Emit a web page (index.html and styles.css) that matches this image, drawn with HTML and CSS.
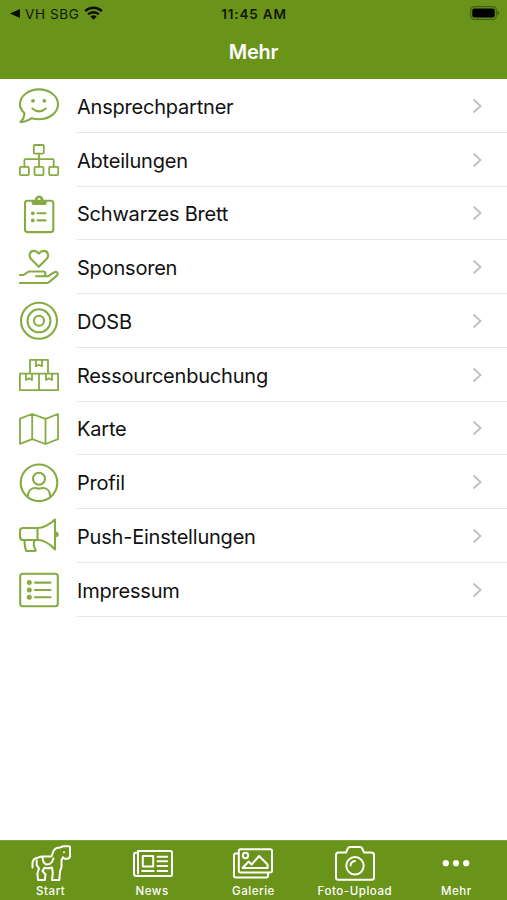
FILE: index.html
```html
<!DOCTYPE html>
<html lang="de">
<head>
<meta charset="utf-8">
<title>Mehr</title>
<link rel="stylesheet" href="styles.css">
</head>
<body>
<div class="app">
  <header class="header">
    <div class="status">
      <div class="back">
        <svg class="back-arrow" viewBox="0 0 10 9"><path d="M10 0v9L0 4.5z"/></svg>
        <span>VH SBG</span>
        <svg class="wifi" viewBox="0 0 19 14"><path d="M1.2 5.1a12 12 0 0 1 16.6 0M4.1 8.3a7.8 7.8 0 0 1 10.8 0"/><path class="wifi-dot" d="M6.4 10.6a4.5 4.5 0 0 1 6.2 0L9.5 13.8z"/></svg>
      </div>
      <span class="time">11:45 AM</span>
      <svg class="battery" viewBox="0 0 30 14"><rect class="shell" x=".7" y=".7" width="25.6" height="12.6" rx="3.6"/><rect x="2.3" y="2.4" width="22.4" height="9.2" rx="2"/><path class="cap" d="M27.4 4.8q2 .7 2 2.2t-2 2.2z"/></svg>
    </div>
    <h1 class="title">Mehr</h1>
  </header>

  <main class="list">
    <a class="row">
      <svg class="icon" viewBox="0 0 40 40"><path d="M5.3 27C2.400 24.400 1 21.600 1 18.300 1 10 9.500 3.400 20 3.400S39 10 39 18.300 30.500 33.300 20 33.300c-2.600 0-5-.3-7.200-1.100C10 34 5.500 36.200 1.500 36c2.500-2.500 4-5.500 3.800-9z"/><path d="M13.300 22.500q6.800 5.800 13.500 0"/><g class="solid"><circle cx="14" cy="14.800" r="1.900"/><circle cx="25.300" cy="14.800" r="1.900"/></g></svg>
      <span class="label">Ansprechpartner</span><svg class="chevron" viewBox="0 0 10 16"><path d="M1.500 1.500L8.500 8l-7 6.500"/></svg>
    </a>
    <a class="row">
      <svg class="icon" viewBox="0 0 40 40"><g class="thin"><rect x="14.800" y="5" width="10" height="8.600" rx="1"/><rect x=".9" y="26.800" width="9" height="8.300" rx="1"/><rect x="15.500" y="26.800" width="9" height="8.300" rx="1"/><rect x="30.200" y="26.800" width="9" height="8.300" rx="1"/><path d="M20 13.600v13.200M5.400 26.800v-6.600q0-1 1-1h27.300q1 0 1 1v6.600"/></g></svg>
      <span class="label">Abteilungen</span><svg class="chevron" viewBox="0 0 10 16"><path d="M1.500 1.500L8.500 8l-7 6.500"/></svg>
    </a>
    <a class="row">
      <svg class="icon" viewBox="0 0 40 40"><rect x="6" y="6.800" width="28.300" height="31.300" rx="2.500"/><path class="solid" fill-rule="evenodd" d="M12.700 6.500h3.100a4.400 4.400 0 1 1 8.700 0h3.100v3q0 1.400-1.500 1.400H14.200q-1.500 0-1.500-1.400zM20.100 4a1.600 1.600 0 1 0 0 3.200 1.600 1.600 0 0 0 0-3.200z"/><path d="M18.500 19.300h8M18.500 26.400h8"/><g class="solid"><circle cx="13.800" cy="19.300" r="1.900"/><circle cx="13.800" cy="26.400" r="1.900"/></g></svg>
      <span class="label">Schwarzes Brett</span><svg class="chevron" viewBox="0 0 10 16"><path d="M1.500 1.500L8.500 8l-7 6.500"/></svg>
    </a>
    <a class="row">
      <svg class="icon" viewBox="0 0 40 40"><path d="M19.800 18.800l-7.700-7.700C9.200 8.200 10.500 3.200 14.600 2.900c2.300-.1 4 1.100 5.200 2.700 1.200-1.600 3-2.800 5.200-2.700 4.200.3 5.400 5.300 2.500 8.200zM1 27h3.600l3.700-2.600Q9.500 23.500 11 23.500h13c3.300 0 3.300 4.700 0 4.700h-7M24.800 28.200h4.500l5.800-3.800c2.700-1.500 4.800 1 2.700 3.200l-7.500 6.400q-1.200 1-3 1H1"/></svg>
      <span class="label">Sponsoren</span><svg class="chevron" viewBox="0 0 10 16"><path d="M1.500 1.500L8.500 8l-7 6.500"/></svg>
    </a>
    <a class="row">
      <svg class="icon" viewBox="0 0 40 40"><circle cx="20" cy="19.800" r="18"/><circle cx="20" cy="19.800" r="11.500"/><circle cx="20" cy="19.800" r="5"/></svg>
      <span class="label">DOSB</span><svg class="chevron" viewBox="0 0 10 16"><path d="M1.500 1.500L8.500 8l-7 6.500"/></svg>
    </a>
    <a class="row">
      <svg class="icon" viewBox="0 0 40 40"><g class="thin"><path d="M11 18.600V4.900h18v13.700M.9 18.600h38.200v16.500H.9zM20 18.600v16.500M17 5v6.300l3-1.500 3 1.500V5M7 18.600V25l3-1.600 3 1.600v-6.400M27 18.600V25l3-1.600 3 1.600v-6.400"/></g></svg>
      <span class="label">Ressourcenbuchung</span><svg class="chevron" viewBox="0 0 10 16"><path d="M1.500 1.500L8.500 8l-7 6.500"/></svg>
    </a>
    <a class="row">
      <svg class="icon" viewBox="0 0 40 40"><g class="thin"><path d="M1 9.700L13.200 5l13.300 4.800L39 5v25.200L26.500 35l-13.300-4.800L1 34.800zM13.200 5v25.200M26.500 9.800V35"/></g></svg>
      <span class="label">Karte</span><svg class="chevron" viewBox="0 0 10 16"><path d="M1.500 1.500L8.500 8l-7 6.500"/></svg>
    </a>
    <a class="row">
      <svg class="icon" viewBox="0 0 40 40"><circle cx="20" cy="19.800" r="18.300"/><circle cx="20" cy="15.800" r="6"/><path d="M8.800 33.500c.2-5 2.800-8.500 7-8.500 1.500 0 2.500.6 4.200.6s2.700-.6 4.200-.6c4.200 0 6.800 3.500 7 8.500"/></svg>
      <span class="label">Profil</span><svg class="chevron" viewBox="0 0 10 16"><path d="M1.500 1.500L8.500 8l-7 6.500"/></svg>
    </a>
    <a class="row">
      <svg class="icon" viewBox="0 0 40 40"><path d="M18.500 12H4.200Q1 12 1 15.200v5.600Q1 24 4.200 24h14.300zM18.500 12c7 0 12.500-4 17.500-8.500v30C31 28 25.500 24 18.500 24M5.500 24c.2 4 .1 7.500 1.800 11h8.200c1.500 0 1.400-1.200.6-2.200-1.600-2-1.600-5.200-.6-8.800"/><path class="solid" d="M36.500 15.500q3.200.4 3.200 2.900t-3.200 2.900z"/></svg>
      <span class="label">Push-Einstellungen</span><svg class="chevron" viewBox="0 0 10 16"><path d="M1.500 1.500L8.500 8l-7 6.500"/></svg>
    </a>
    <a class="row">
      <svg class="icon" viewBox="0 0 40 40"><rect x="1.200" y="3.700" width="37.600" height="32.500" rx="2.500"/><path d="M16 12.600h15.500M16 20h15.500M16 27.300h15.500"/><g class="solid"><circle cx="10.300" cy="12.600" r="2.500"/><circle cx="10.300" cy="20" r="2.500"/><circle cx="10.300" cy="27.300" r="2.500"/></g></svg>
      <span class="label">Impressum</span><svg class="chevron" viewBox="0 0 10 16"><path d="M1.500 1.500L8.500 8l-7 6.500"/></svg>
    </a>
  </main>

  <nav class="tabs">
    <a class="tab">
      <svg class="tab-icon" viewBox="0 0 40 40"><path d="M1.500 22.500v-4q0-4.700 5-5.700 2.500-1.300 5-1.300h9l2-5.500Q24.500 2.500 29 2.500l3-1.200h6q1 0 1 1v8.500q0 3-3 3h-2.500L32 12.300l-1.500 3V22L29 26.500l-.7 8.500H21l.8-7-.8-5.500q-4 1.500-7.500.2L11.500 26l3 3.500-.7 5.500H7l-.6-6.500L8 23.500 5.700 20v-4.500M11.500 12q.3 7.500 5 7.500 4 0 6-6"/><circle class="tab-solid" cx="33" cy="7.200" r="1"/></svg>
      <span>Start</span>
    </a>
    <a class="tab">
      <svg class="tab-icon news" viewBox="0 0 40 40"><path d="M5 6h32.500q1.500 0 1.500 1.500v22q0 1.500-1.500 1.500h-34Q1 31 1 28.500v-19q0-1.700 1.700-1.700H5M5 6v22.500M9.800 11h10.400v10.500H9.800zM24.500 11.700h9.700M24.500 16.300h9.700M24.500 21h9.700M9.200 26h11.500M24.500 26h9.700"/></svg>
      <span>News</span>
    </a>
    <a class="tab">
      <svg class="tab-icon" viewBox="0 0 40 40"><path d="M7.500 4.300h29.800q1.700 0 1.700 1.700v19.800q0 1.700-1.700 1.700H7.500q-1.700 0-1.700-1.700V6q0-1.700 1.700-1.700zM5.500 8.500H2.700Q1 8.500 1 10.200v20.600q0 1.700 1.700 1.700h30.600q1.700 0 1.700-1.700V27.500M9.800 22.800l5.800-6.300 3 3 7.500-8.500 8.500 8.500V23H9.800z"/><circle cx="12.500" cy="10.500" r="2.700"/></svg>
      <span>Galerie</span>
    </a>
    <a class="tab">
      <svg class="tab-icon" viewBox="0 0 40 40"><path d="M3.500 7.500H11l2-4.300q.5-1.200 1.800-1.200h10.400q1.300 0 1.800 1.200l2 4.300h7.500Q39 7.500 39 10v22.500q0 2.200-2.300 2.200H3.300Q1 34.700 1 32.500V10q0-2.500 2.500-2.500z"/><circle cx="20" cy="20.800" r="8.700"/><path d="M15.500 20.500q.5-4 4.500-4.500"/></svg>
      <span>Foto-Upload</span>
    </a>
    <a class="tab">
      <svg class="tab-icon" viewBox="0 0 40 40"><g class="tab-solid"><circle cx="9.800" cy="18.200" r="3.100"/><circle cx="20" cy="18.200" r="3.100"/><circle cx="30.200" cy="18.200" r="3.100"/></g></svg>
      <span>Mehr</span>
    </a>
  </nav>
</div>
</body>
</html>
```
FILE: styles.css
```css
* { box-sizing: border-box; }
body { margin: 0; background: #fff; font-family: Inter, "Liberation Sans", sans-serif; }
.app { width: 507px; height: 900px; display: flex; flex-direction: column; overflow: hidden; }
.header { height: 79px; flex: none; background: #6a931a; }
.status { height: 27px; display: grid; grid-template-columns: 1fr auto 1fr; align-items: center; padding: 0 7px 0 10px; color: #101804; font-size: 13.5px; }
.back { display: flex; align-items: center; letter-spacing: .6px; }
.back-arrow { width: 10px; height: 9px; margin-right: 5px; fill: #0a1000; }
.wifi { width: 19px; height: 14px; margin-left: 4.500px; margin-top: -1px; fill: none; stroke: #0a1000; stroke-width: 2.5; }
.wifi-dot { fill: #0a1000; stroke: none; }
.time { font-weight: 600; font-size: 13.500px; letter-spacing: .85px; margin-right: 2px; }
.battery { width: 30px; height: 14px; justify-self: end; margin-top: -1px; fill: #000; }
.shell { fill: none; stroke: #42600d; stroke-width: 1.200; }
.cap { fill: #42600d; }
.title { margin: 0; color: #fff; font-size: 20px; line-height: 51px; font-weight: 600; letter-spacing: -.2px; text-align: center; }

.list { flex: 1; }
.row { height: 53.750px; display: grid; grid-template-columns: 58px 1fr 10px; align-items: center; padding: 0 25px 0 19px; color: #111; background: linear-gradient(#e7e7e8, #e7e7e8) 77px 100% / 430px 1px no-repeat; }
.icon { width: 40px; height: 40px; margin-top: 1px; fill: none; stroke: #86ab42; stroke-width: 2.100; stroke-linecap: round; stroke-linejoin: round; }
.thin { stroke-width: 1.800; }
.solid { fill: #86ab42; stroke: none; }
.label { padding-top: 2px; font-size: 20px; line-height: 26px; letter-spacing: -.21px; white-space: nowrap; }
.chevron { width: 10px; height: 16px; fill: none; stroke: #c2c2c5; stroke-width: 2; }

.tabs { height: 60px; flex: none; display: grid; grid-template-columns: repeat(5, 1fr); background: #6a931a; border-top: 1px solid #7da13a; }
.tab { display: flex; flex-direction: column; align-items: center; padding-top: 4px; color: #fff; font-size: 11.500px; line-height: 13px; font-weight: 500; letter-spacing: .55px; }
.tab-icon { width: 40px; height: 40px; flex: none; fill: none; stroke: #fff; stroke-width: 2; stroke-linecap: round; stroke-linejoin: round; }
.news { margin-left: 1px; }
.tab-solid { fill: #fff; stroke: none; }
```
